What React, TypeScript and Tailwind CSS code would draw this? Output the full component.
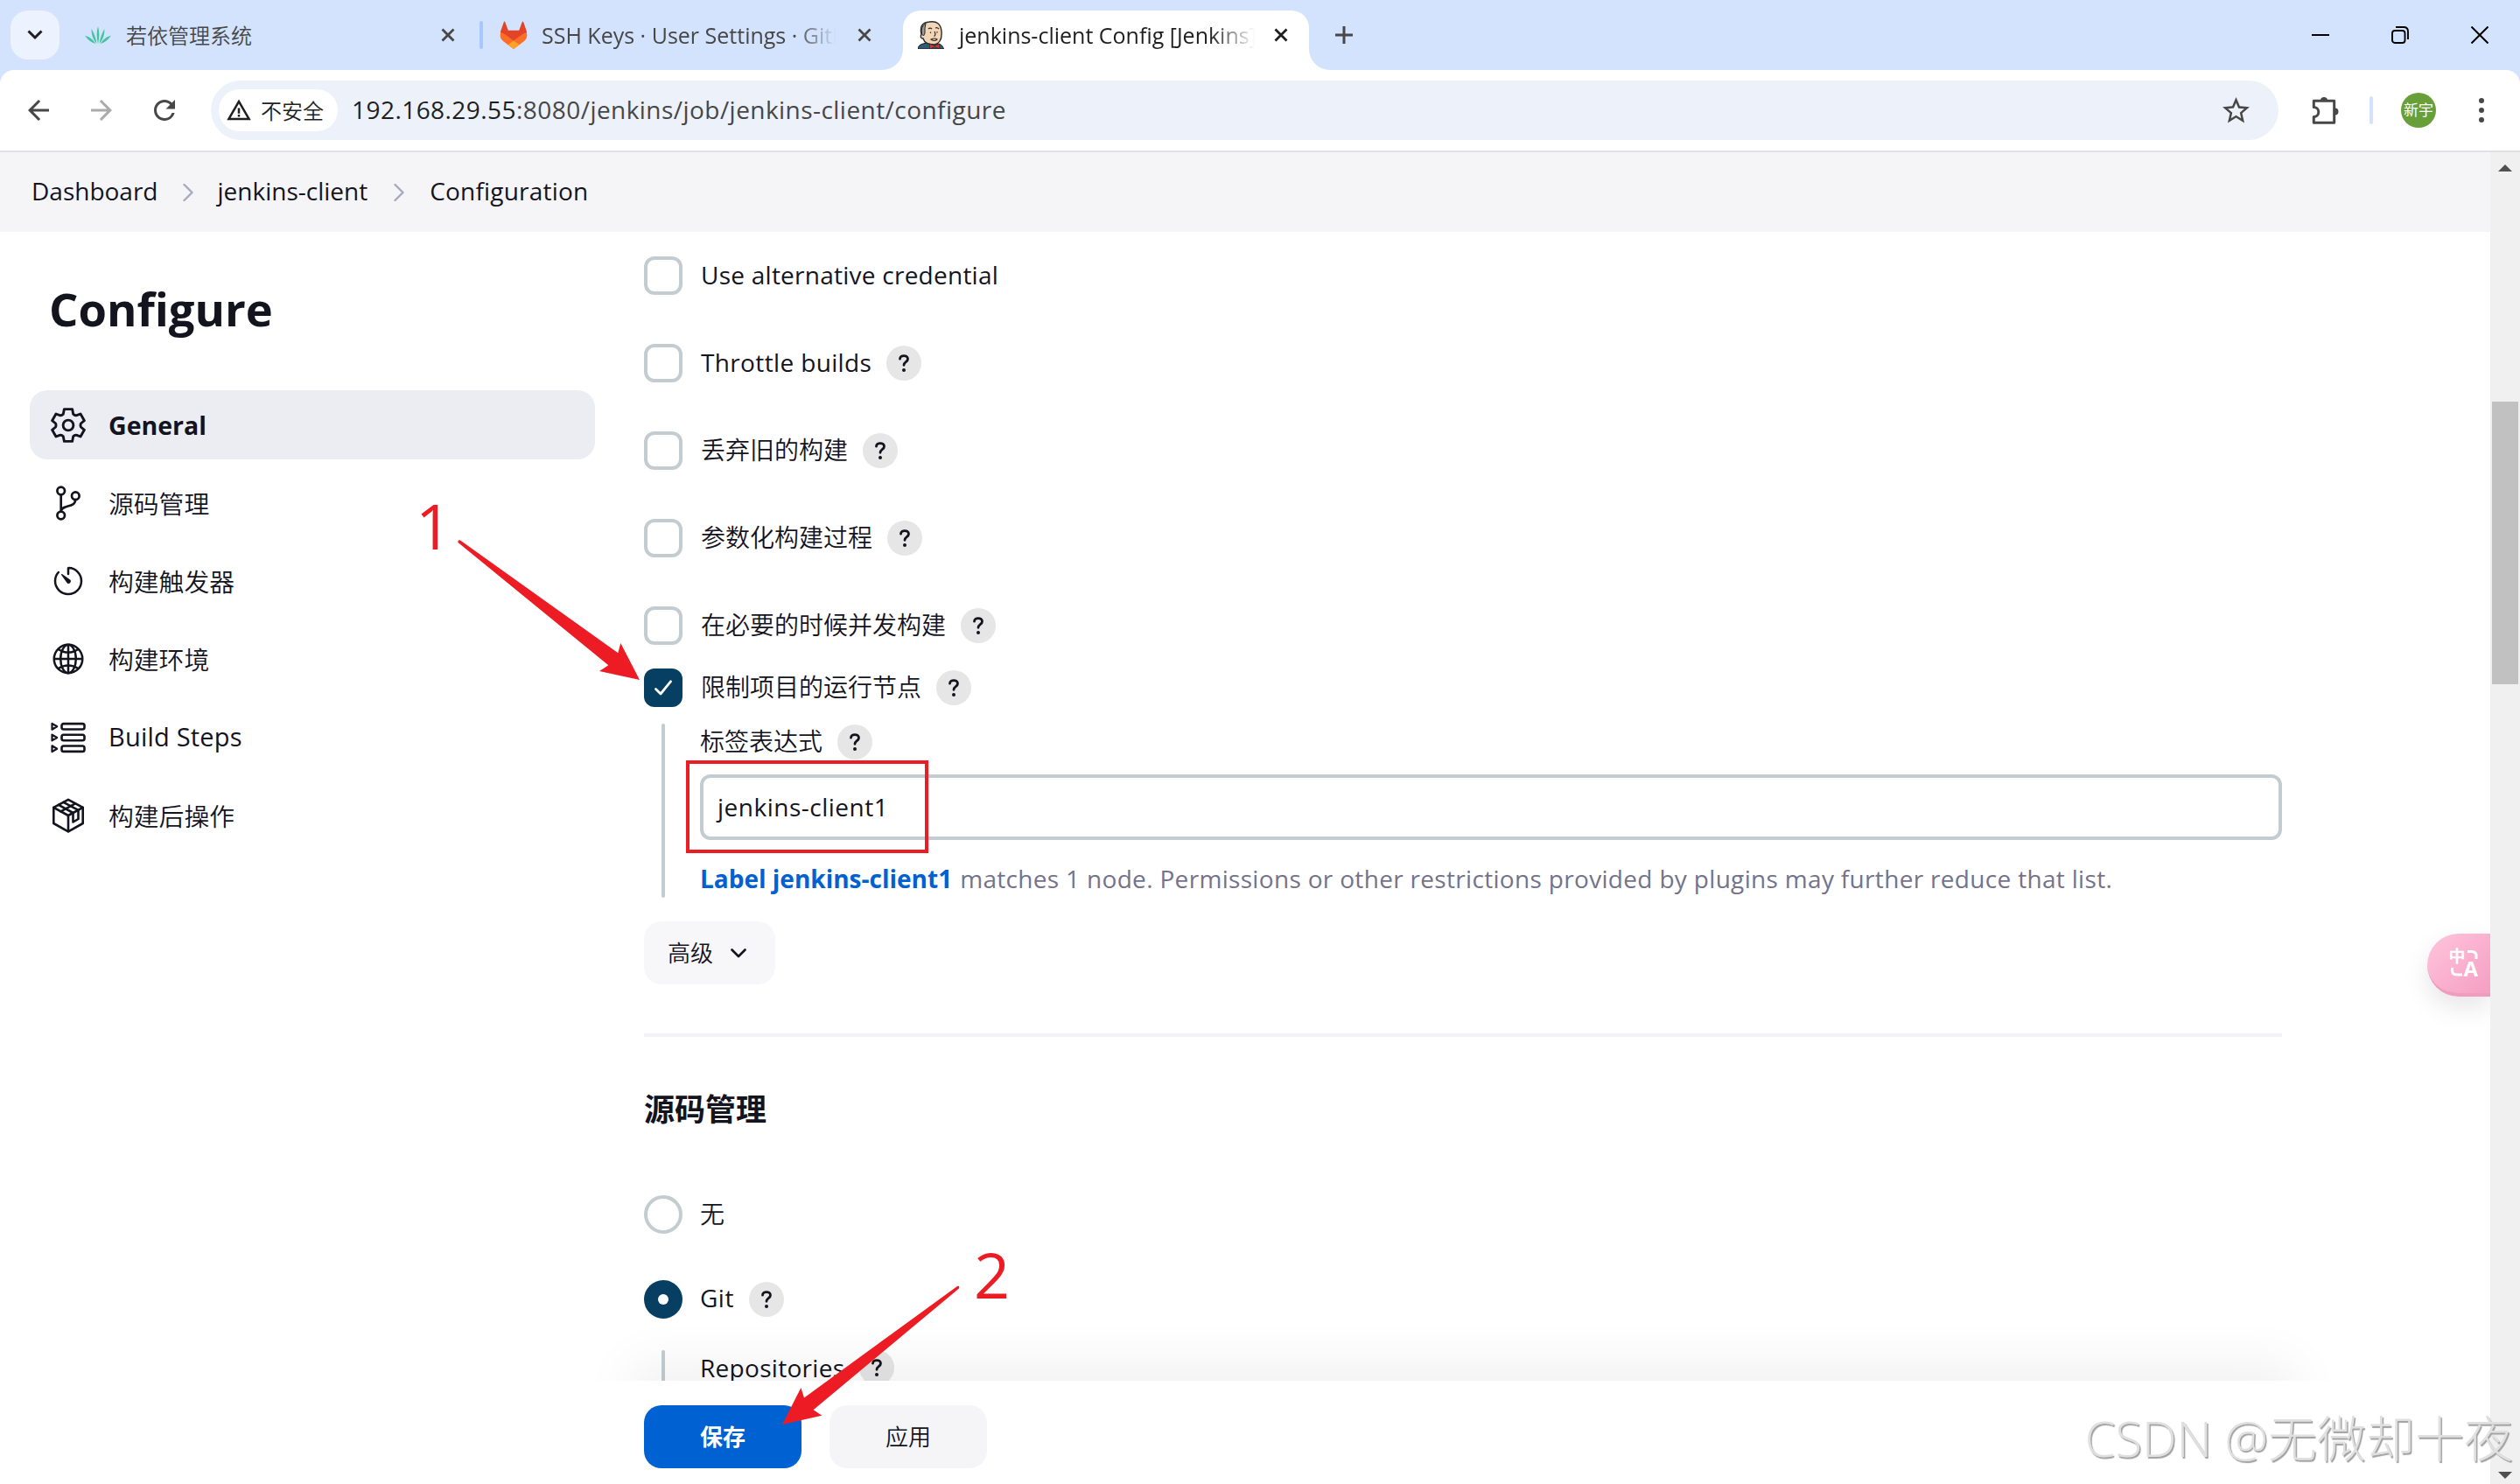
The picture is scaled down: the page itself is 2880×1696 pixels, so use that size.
import React from "react";
import { IoGlobeOutline, IoTimerOutline } from "react-icons/io5";
import { MdArrowBack, MdArrowForward, MdRefresh, MdStarBorder, MdWarningAmber } from "react-icons/md";

interface IconProps {
  className?: string;
}

interface HelpRowProps {
  label: string;
  checked?: boolean;
  help?: boolean;
  className?: string;
  textClass?: string;
}

interface TaskProps {
  icon: React.ReactNode;
  label: string;
  active?: boolean;
  textClass?: string;
}

const stroke = {
  fill: "none",
  stroke: "currentColor",
  strokeLinecap: "round" as const,
  strokeLinejoin: "round" as const,
};

/* Tab strip icons */

const LeafIcon = () => (
  <svg viewBox="0 0 30 20" className="w-[30px] h-5 shrink-0" fill="#45c3a1">
    <path d="M15 20C13.200 13 13.200 6 15 0C16.800 6 16.800 13 15 20Z" />
    <path d="M13.500 20C9 15 7.500 9 7.500 3C10.500 8 12.500 13 13.500 20Z" />
    <path d="M16.500 20C21 15 22.500 9 22.500 3C19.500 8 17.500 13 16.500 20Z" />
    <path d="M12 20C7 18.500 3 15 0 10.500C5 12 9.500 15 12 20Z" />
    <path d="M18 20C23 18.500 27 15 30 10.500C25 12 20.500 15 18 20Z" />
  </svg>
);

const GitlabIcon = () => (
  <svg viewBox="0 0 32 32" className="size-8 shrink-0">
    <path d="M1.500 12Q-1 19 4 23L16 32L28 23Q33 19 30.500 12L16 16Z" fill="#fc6d26" />
    <path d="M6 .5Q5.200 .2 4.800 1.200L1.200 11.500L1 13Q4.500 13.500 8 16.500L16 22.500L24 16.500Q27.500 13.500 31 13L30.800 11.500L27.200 1.200Q26.800 .2 26 .5L22.200 10.800H9.800Z" fill="#e24329" />
    <path d="M16 22.500L22.500 27.300L16 32L9.500 27.300Z" fill="#fca326" />
  </svg>
);

const JenkinsIcon = () => (
  <svg viewBox="0 0 30 32" className="w-[30px] h-8 shrink-0">
    <path d="M0 32Q.5 27 6 26L12 24L22 26Q28 26 29.500 32Z" fill="#2f5a72" stroke="#1d1d1d" strokeWidth="1" />
    <path d="M4 15Q1 2 13 1Q26 -1 27 12Q28 25 19 27Q8 27 6 20Q2 20 4 15Z" fill="#f0d6b7" stroke="#2a2a2a" strokeWidth="1.400" />
    <path d="M4.500 15Q3 6 9 3Q7.500 8 8 14L6.500 17Z" fill="#9a9a9a" stroke="#2a2a2a" strokeWidth="1" />
    <path d="M12 9Q14 7 16 9M20 8Q22 7 24 9M14.500 12.500V14M22 12V13.500M19 12Q21 16 18.500 17.500M15 21Q19 19 22 21Q19 24 15 21Z" fill="none" stroke="#3a2a22" strokeWidth="1.200" />
    <path d="M13.500 26L19 28.500L24.500 26L25 31.500L19 29.800L13.500 32Z" fill="#d9322a" stroke="#2a2a2a" strokeWidth=".7" />
  </svg>
);

const CloseIcon = ({ className = "" }: IconProps) => (
  <svg viewBox="0 0 16 16" className={`size-4 shrink-0 ${className}`}>
    <path d="M1.500 1.500L14.500 14.500M14.500 1.500L1.500 14.500" fill="none" stroke="currentColor" strokeWidth="2.800" />
  </svg>
);

const PuzzleIcon = () => (
  <svg viewBox="0 0 34 34" className="size-[34px] text-[#474747]">
    <path
      d="M4.300 6.300H27.700V31.300H4.300V24.500A5.500 5.500 0 0 0 4.300 13.500Z"
      fill="none"
      stroke="currentColor"
      strokeWidth="3"
      strokeLinejoin="round"
    />
    <path d="M12 6A4 4 0 0 1 20 6ZM28.500 14.500A4 4 0 0 1 28.500 22.500Z" fill="currentColor" />
  </svg>
);

/* Sidebar icons */

const GearIcon = () => (
  <svg viewBox="0 0 40 40" className="size-10" {...stroke} strokeWidth="2.900">
    <path d="M14.300 7.300L15.400 1.600H24.600L25.700 7.300Q27.500 9.200 29.800 8.600L34 7L38.400 14.700L34.400 18Q33.600 20 34.400 22L38.400 25.300L34 33L29.800 31.400Q27.500 30.800 25.700 32.700L24.600 38.400H15.400L14.300 32.700Q12.500 30.800 10.200 31.400L6 33L1.600 25.300L5.600 22Q6.400 20 5.600 18L1.600 14.700L6 7L10.200 8.600Q12.500 9.200 14.300 7.300Z" />
    <circle cx="20" cy="20" r="5.900" />
  </svg>
);

const BranchIcon = () => (
  <svg viewBox="0 0 40 40" className="size-10" {...stroke} strokeWidth="2.700">
    <circle cx="11.700" cy="6" r="4.300" />
    <circle cx="11.700" cy="34" r="4.300" />
    <circle cx="28.300" cy="11.700" r="4.300" />
    <path d="M11.700 10.300V29.700M28.300 16C27.500 26 13.500 21 11.700 29" />
  </svg>
);

const StepsIcon = () => (
  <svg viewBox="0 0 40 40" className="size-10" {...stroke} strokeWidth="2.600">
    {[7.300, 20, 32.700].map((y) => (
      <g key={y}>
        <path d={`M1.500 ${y - 3.400}L7.200 ${y}L1.500 ${y + 3.400}Z`} strokeWidth="2.200" />
        <rect x="12.500" y={y - 3.200} width="26" height="6.400" rx="2.200" />
      </g>
    ))}
  </svg>
);

const PackageIcon = () => (
  <svg viewBox="0 0 40 40" className="size-10" {...stroke} strokeWidth="2.600">
    <path d="M20 1.800L36.700 10.800V29L20 38.300L3.300 29V10.800Z" />
    <path d="M3.300 10.800L20 20L36.700 10.800M20 20V38.300" />
    <path d="M9 7.800L25.500 17V27.500L31.500 24V13.800L14.500 4.800M28 6.300L11.500 15.300" />
  </svg>
);

const ChevronRight = ({ className = "" }: IconProps) => (
  <svg viewBox="0 0 12 20" className={`w-3 h-5 ${className}`} {...stroke} strokeWidth="2.400">
    <path d="M1.500 1L10.500 10L1.500 19" />
  </svg>
);

/* Form parts */

const Help = () => (
  <span className="flex items-center justify-center size-10 rounded-full bg-[#e6e6e6] text-[#14141f]">
    <svg viewBox="0 0 12 20" className="w-3 h-5" {...stroke} strokeWidth="2.800">
      <path d="M1.500 5.200C1.500 .4 10.500 .4 10.500 5.200C10.500 8.800 6 8.500 6 12.300" />
      <circle cx="6" cy="18" r="2" fill="currentColor" stroke="none" />
    </svg>
  </span>
);

const CheckRow = ({ label, checked, help = true, className = "h-[100px]", textClass = "font-[350]" }: HelpRowProps) => (
  <div className={`flex items-center ${className}`}>
    {checked ? (
      <span className="flex items-center justify-center size-11 rounded-xl bg-[#063f62]">
        <svg viewBox="0 0 20 18" className="w-5 h-[18px] text-white" {...stroke} strokeWidth="2.800">
          <path d="M1.500 10.500L7 16L18.500 1.800" />
        </svg>
      </span>
    ) : (
      <span className="size-11 rounded-xl border-4 border-[#c3ccd1]" />
    )}
    <span className={`ml-[21px] mr-[17px] ${textClass}`}>{label}</span>
    {help && <Help />}
  </div>
);

const Task = ({ icon, label, active, textClass = "text-[28.800px] font-[350] pt-0.5" }: TaskProps) => (
  <div className={`flex items-center gap-[26px] h-[79px] pl-6 rounded-[20px] ${active ? "bg-[#ecedf3]" : ""}`}>
    {icon}
    <span className={textClass}>{label}</span>
  </div>
);

const TabStrip = () => (
  <div className="flex items-center h-20 shrink-0 bg-[#d3e3fd] text-[25px] text-[#474747]">
    <div className="flex items-center justify-center size-14 ml-3 rounded-[20px] bg-[#ecf2fe]">
      <svg viewBox="0 0 18 12" className="w-[18px] h-3 text-[#1f1f1f]">
        <path d="M1.500 1.500L9 9L16.500 1.500" fill="none" stroke="currentColor" strokeWidth="3" />
      </svg>
    </div>

    <div className="flex items-center w-[423px] ml-[29px]">
      <LeafIcon />
      <span className="ml-[17px] flex-1 pt-0.5 text-[24px] font-[350]">若依管理系统</span>
      <CloseIcon />
    </div>

    <div className="w-1 h-8 ml-7 rounded-full bg-[#a8c7fa]" />

    <div className="flex items-center w-[425px] ml-[19px]">
      <GitlabIcon />
      <span className="ml-4 w-[340px] mr-auto overflow-hidden whitespace-nowrap [mask-image:linear-gradient(to_right,#000_85%,transparent_99%)]">
        SSH Keys · User Settings · GitLab
      </span>
      <CloseIcon />
    </div>

    <div className="relative flex items-center self-end w-[464px] h-[68px] ml-9 pb-3 pl-[17px] pr-6 rounded-t-[20px] bg-white text-[#1f1f1f]">
      <svg viewBox="0 0 24 24" className="absolute -left-6 bottom-0 size-6">
        <path d="M24 0V24H0A24 24 0 0 0 24 0Z" fill="#fff" />
      </svg>
      <svg viewBox="0 0 24 24" className="absolute -right-6 bottom-0 size-6">
        <path d="M0 0V24H24A24 24 0 0 1 0 0Z" fill="#fff" />
      </svg>
      <JenkinsIcon />
      <span className="ml-[13px] pl-1 w-[342px] mr-auto overflow-hidden whitespace-nowrap [mask-image:linear-gradient(to_right,#000_85%,transparent_100%)]">
        jenkins-client Config [Jenkins]
      </span>
      <CloseIcon />
    </div>

    <svg viewBox="0 0 20 20" className="size-5 ml-[30px]">
      <path d="M10 0V20M0 10H20" stroke="currentColor" strokeWidth="3" />
    </svg>

    <div className="flex items-center gap-[71px] ml-auto mr-9 text-black">
      <div className="w-5 h-0.5 bg-black" />
      <svg viewBox="0 0 20 20" className="size-5" fill="none" stroke="currentColor" strokeWidth="1.900">
        <rect x="1" y="5" width="14.500" height="14" rx="3" />
        <path d="M5 1H14Q19 1 19 6V15" />
      </svg>
      <svg viewBox="0 0 20 20" className="size-5">
        <path d="M.5 .5L19.500 19.500M19.500 .5L.5 19.500" stroke="currentColor" strokeWidth="2" />
      </svg>
    </div>
  </div>
);

const Toolbar = () => (
  <div className="bg-[#d3e3fd] shrink-0">
    <div className="flex items-center h-[94px] border-b-2 border-[#e1e1e3] rounded-t-2xl bg-white text-[#474747]">
      <MdArrowBack className="size-9 ml-[26px]" />
      <MdArrowForward className="size-9 ml-9 text-[#ababab]" />
      <MdRefresh className="size-9 ml-9" />

      <div className="flex items-center w-[2363px] h-[68px] ml-[35px] pl-[9px] pr-[30px] rounded-full bg-[#ecf1fa]">
        <div className="flex items-center w-[136px] h-12 pl-2 gap-2.5 rounded-full bg-white text-[24px] text-[#1f1f1f]">
          <MdWarningAmber className="size-[30px]" />
          <span className="pt-0.5 font-[350] whitespace-nowrap">不安全</span>
        </div>
        <span className="ml-4 text-[28px] tracking-[0.450px]">
          <span className="text-[#1f1f1f]">192.168.29.55</span>:8080/jenkins/job/jenkins-client/configure
        </span>
        <MdStarBorder className="size-[37px] ml-auto" />
      </div>

      <span className="ml-9"><PuzzleIcon /></span>
      <div className="w-1 h-8 ml-[34px] rounded-full bg-[#d3e3fd]" />
      <div className="flex items-center justify-center size-10 ml-8 rounded-full bg-[#689f38] text-[17px] text-white">新宇</div>
      <div className="flex flex-col gap-[5px] ml-[49px]">
        <span className="size-1.5 rounded-full bg-[#474747]" />
        <span className="size-1.5 rounded-full bg-[#474747]" />
        <span className="size-1.5 rounded-full bg-[#474747]" />
      </div>
    </div>
  </div>
);

const Sidebar = () => (
  <div className="w-[736px] shrink-0 pl-[34px] pr-14">
    <h1 className="mt-[58px] ml-[22px] h-[60px] leading-[60px] text-[52.500px] font-bold">Configure</h1>
    <div className="flex flex-col gap-[10.300px] mt-[63px]">
      <Task icon={<GearIcon />} label="General" active textClass="text-[28.500px] font-bold pt-0.5" />
      <Task icon={<BranchIcon />} label="源码管理" />
      <Task icon={<IoTimerOutline className="size-10" />} label="构建触发器" />
      <Task icon={<IoGlobeOutline className="size-10" />} label="构建环境" />
      <Task icon={<StepsIcon />} label="Build Steps" textClass="text-[29px] tracking-[0.200px]" />
      <Task icon={<PackageIcon />} label="构建后操作" />
    </div>
  </div>
);

const ConfigForm = () => (
  <>
    <CheckRow label="Use alternative credential" help={false} textClass="tracking-[0.250px]" />
    <CheckRow label="Throttle builds" textClass="tracking-[0.360px]" />
    <CheckRow label="丢弃旧的构建" />
    <CheckRow label="参数化构建过程" />
    <CheckRow label="在必要的时候并发构建" />
    <CheckRow label="限制项目的运行节点" checked className="h-[42px]" />

    <div className="flex mt-5 ml-5 h-[199px]">
      <div className="w-1 rounded-full bg-[#c3ccd1]" />
      <div className="flex-1 ml-10">
        <div className="flex items-center gap-[17px] h-[42px]">
          <span className="font-[350]">标签表达式</span>
          <Help />
        </div>
        <div className="flex items-center h-[75px] mt-4 pl-4 border-4 border-[#c3ccd1] rounded-xl tracking-[0.500px]">
          jenkins-client1
        </div>
        <div className="flex items-center h-[47px] mt-[21px] whitespace-nowrap text-[#73738c]">
          <span className="font-bold text-[#0061d2]">Label jenkins-client1</span>
          <span className="ml-[9px] tracking-[0.320px]">
            matches 1 node. Permissions or other restrictions provided by plugins may further reduce that list.
          </span>
        </div>
      </div>
    </div>

    <div className="flex items-center w-[150px] h-[72px] mt-[27px] pl-[27px] gap-5 rounded-[20px] bg-[#f7f7fa] text-[26px] font-[350]">
      高级
      <svg viewBox="0 0 18 11" className="w-[18px] h-[11px]" {...stroke} strokeWidth="2.600">
        <path d="M1.500 1.500L9 9L16.500 1.500" />
      </svg>
    </div>

    <div className="h-1 mt-14 bg-[#f2f2f7]" />

    <h2 className="mt-[59px] h-12 leading-[48px] text-[35px] font-bold">源码管理</h2>

    <div className="flex items-center h-11 mt-[74px] gap-5">
      <span className="size-11 rounded-full border-4 border-[#c3ccd1]" />
      <span className="font-[350]">无</span>
    </div>
    <div className="flex items-center h-11 mt-[53px]">
      <span className="flex items-center justify-center size-11 mr-5 rounded-full bg-[#063f62]">
        <span className="size-3 rounded-full bg-white" />
      </span>
      <span className="mr-[17px] pb-0.5 tracking-[0.500px]">Git</span>
      <Help />
    </div>
    <div className="flex mt-9 ml-5 h-[60px]">
      <div className="w-1 rounded-full bg-[#c3ccd1]" />
      <div className="flex items-center gap-[17px] h-10 ml-10">
        <span className="pt-px tracking-[0.300px]">Repositories</span>
        <Help />
      </div>
    </div>
  </>
);

const ButtonBar = () => (
  <div className="flex h-[118px] pt-7 gap-8 text-[26px]">
    <button className="w-[180px] h-[72px] rounded-[20px] bg-[#0061d2] font-bold text-white">保存</button>
    <button className="w-[180px] h-[72px] rounded-[20px] bg-[#f5f5f8] font-[350]">应用</button>
  </div>
);

const Scrollbar = () => (
  <div className="flex flex-col items-center w-[34px] shrink-0 pt-3.5 pb-1.5 bg-[#f0f0f0]">
    <div className="border-x-8 border-b-8 border-x-transparent border-b-[#505050]" />
    <div className="w-[30px] h-[323px] mt-[263px] bg-[#c1c1c1]" />
    <div className="mt-auto border-x-8 border-t-8 border-x-transparent border-t-[#505050]" />
  </div>
);

const App = () => {
  return (
    <div className="relative flex flex-col w-[2880px] h-[1696px] overflow-hidden bg-white font-['Open_Sans','Noto_Sans_CJK_SC',sans-serif] text-[28px] leading-[1.4] text-[#14141f]">
      <TabStrip />
      <Toolbar />

      <div className="flex flex-1">
        <div className="w-[2846px]">
          <div className="flex items-center h-[91px] pl-9 bg-[#f5f5f8]">
            <span className="pb-0.5">Dashboard</span>
            <ChevronRight className="ml-7 text-[#a9a9bd]" />
            <span className="ml-7 pb-0.5">jenkins-client</span>
            <ChevronRight className="ml-[30px] text-[#a9a9bd]" />
            <span className="ml-[29px] pb-0.5 tracking-[0.200px]">Configuration</span>
          </div>
          <div className="flex">
            <Sidebar />
            <div className="flex-1">
              <div className="relative h-[1313px] -ml-[60px] pl-[60px] pr-[238px] overflow-hidden">
                <ConfigForm />
                {/* Shadow cast by the sticky button bar */}
                <div className="absolute left-11 top-full w-[1904px] h-[100px] shadow-[0_-20px_60px_rgba(0,0,0,0.06)]" />
              </div>
              <ButtonBar />
            </div>
          </div>
        </div>
        <Scrollbar />
      </div>

      {/* Floating translate button */}
      <div className="absolute left-[2774px] top-[1067px] w-[72px] h-[72px] rounded-l-full bg-linear-to-br from-[#ffc4dc] to-[#f49fc3] shadow-[0_12px_30px_rgba(0,0,0,0.1)] border-b-4 border-[#f09cbd] [clip-path:inset(-60px_0_-60px_-60px)]">
        <svg viewBox="0 0 36 36" className="ml-[25px] mt-4 size-9" fill="none" stroke="#fff" strokeWidth="3">
          <text x="-.5" y="17" fontSize="19" fontWeight="700" fill="#fff" stroke="none">中</text>
          <text x="16.500" y="33" fontSize="24" fontWeight="700" fill="#fff" stroke="none">A</text>
          <path d="M21 4.500H26Q31 4.500 31 9.500V13M3.500 23V26Q3.500 31 9 31H15" />
        </svg>
      </div>

      {/* Annotations */}
      <div className="absolute left-[784px] top-[869px] w-[277px] h-[106px] border-4 border-[#ed1c24]" />
      <span className="absolute left-[475px] top-[550px] leading-[100px] text-[72px] text-[#ed1c24]">1</span>
      <span className="absolute left-[1113px] top-[1406px] leading-[100px] text-[72px] text-[#ed1c24]">2</span>
      <svg viewBox="0 0 2880 1696" className="absolute inset-0 w-[2880px] h-[1696px]" fill="#ed1c24">
        <path d="M526 617.500L706.300 746.300L709.300 735L731 777L685 767L695.300 760.300L523.500 620Q523 616.500 526 617.500Z" />
        <path d="M1094 1470L919 1597.400L915.400 1586L894 1628L939.300 1617.700L929.600 1611.200L1096 1472.500Q1097 1469 1094 1470Z" />
      </svg>

      {/* Watermark */}
      <div className="absolute right-2 bottom-[13px] leading-[80px] whitespace-nowrap text-[56px] font-light text-[#e0e0e0] [text-shadow:1.500px_1.500px_1px_#a0a0a0]">
        CSDN @无微却十夜
      </div>
    </div>
  );
};

export default App;
